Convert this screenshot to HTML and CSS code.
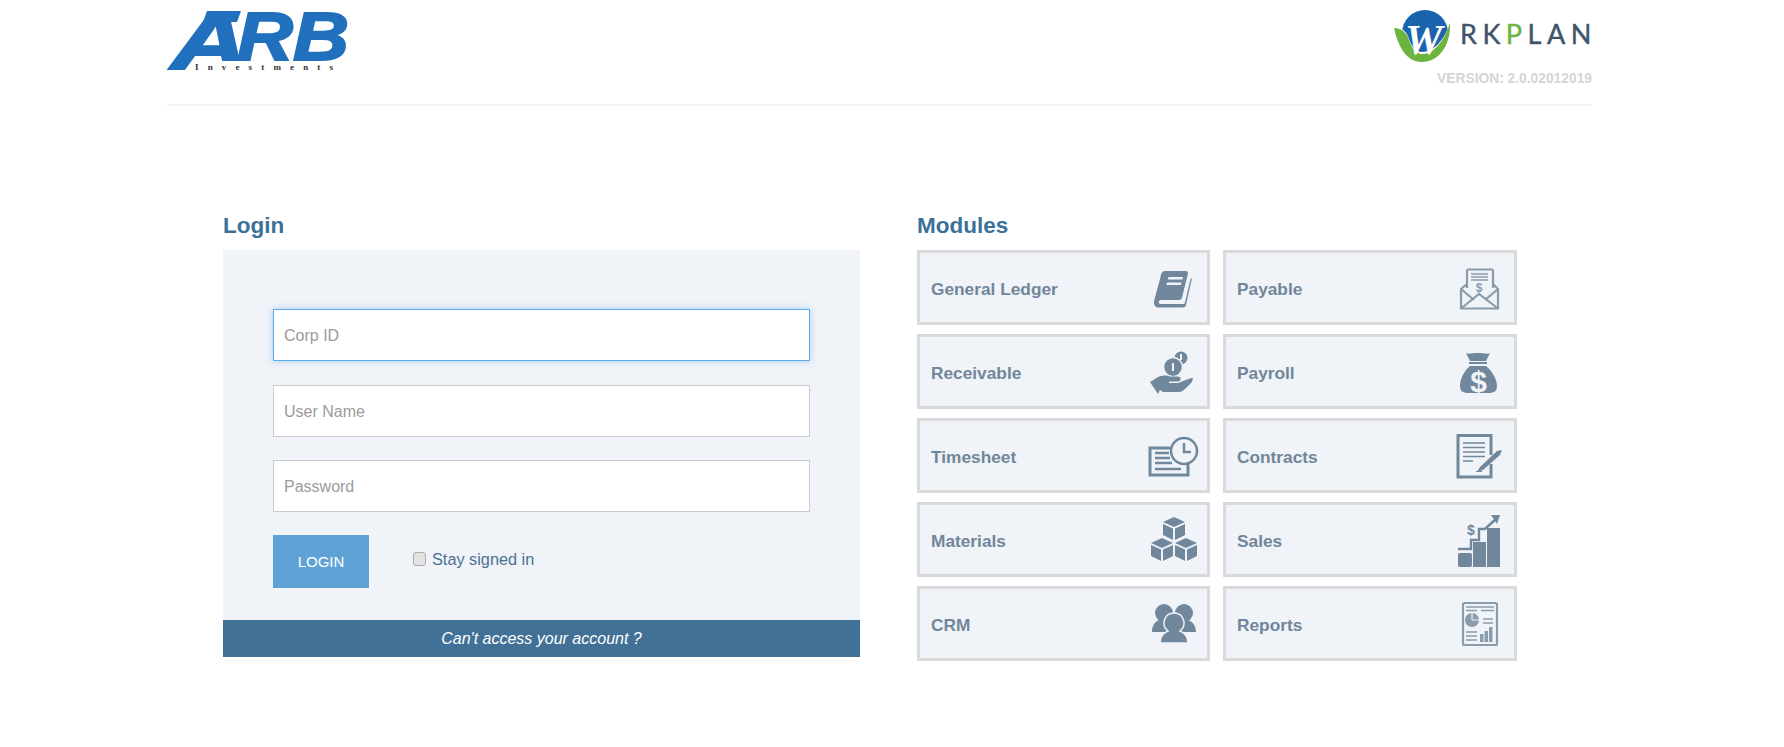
FILE: index.html
```html
<!DOCTYPE html>
<html lang="en">
<head>
<meta charset="utf-8">
<title>ARB Investments - Workplan Login</title>
<link rel="stylesheet" href="styles.css">
</head>
<body>
<div class="page">
  <header class="header">
    <svg class="logo-arb" viewBox="0 0 182 62" width="182" height="62" role="img" aria-label="ARB Investments">
      <text class="arb-text arb-a" x="4" y="59" textLength="77" lengthAdjust="spacingAndGlyphs">A</text>
      <polygon class="arb-fill" points="40,1 74,1 70,12 36,12"/>
      <rect class="arb-mask" x="26" y="51" width="60" height="12"/>
      <text class="arb-text" x="70" y="50" textLength="112" lengthAdjust="spacingAndGlyphs">RB</text>
      <text class="arb-sub" x="28" y="60" textLength="138">Investments</text>
    </svg>
    <div class="brand">
      <svg class="logo-wp" viewBox="0 0 198 52" width="198" height="52" role="img" aria-label="Workplan">
        <circle class="wp-blue" cx="31" cy="23" r="23"/>
        <path class="wp-gap" d="M0 18C8 17 13 22 15 29c3 9 8 13 13 13 12 0 22-12 28-29 1 22-11 39-28 39C12 52 4 36 0 18z"/>
        <path class="wp-green" d="M0 18C8 18 13 23 15 30c3 9 8 14 13 14 12 0 22-13 28-31 1 22-11 39-28 39C12 52 4 36 0 18z"/>
        <text class="wp-w" x="11" y="44">W</text>
        <text class="wp-text" x="66" y="34">RK<tspan class="wp-p">P</tspan>LAN</text>
      </svg>
      <div class="version">VERSION: 2.0.02012019</div>
    </div>
  </header>

  <main class="main">
    <section class="login">
      <h2 class="title">Login</h2>
      <form class="panel">
        <div class="fields">
          <input class="field is-focus" type="text" placeholder="Corp ID">
          <input class="field" type="text" placeholder="User Name">
          <input class="field" type="password" placeholder="Password">
          <div class="actions">
            <button class="btn" type="button">LOGIN</button>
            <label class="stay"><input class="check" type="checkbox"><span>Stay signed in</span></label>
          </div>
        </div>
        <a class="help">Can't access your account ?</a>
      </form>
    </section>

    <section class="modules">
      <h2 class="title">Modules</h2>
      <div class="tiles">
        <a class="tile"><span>General Ledger</span>
          <svg class="ico" viewBox="0 0 40 40" width="40" height="40">
            <path class="solid" fill-rule="evenodd" d="M13 3h21c1.500 0 2.300 1 2 2.500l-6 24c-.5 1.700-1.500 2.500-3 2.500H9c-3 0-3 4 0 4h22c1 0 1.600-.5 2-1.500L38.500 11l1.500-1-6 27c-.5 1.700-1.500 2.500-3.500 2.500H7c-3 0-5-2-5-5 0-1 .3-2 .5-3L9 7c.6-2.500 2-4 4-4zM16.500 9l-.6 2.500h14.500l.6-2.500zM15 14.500l-.6 2.500h14.500l.6-2.500z"/>
          </svg>
        </a>
        <a class="tile"><span>Payable</span>
          <svg class="ico ico-light" viewBox="0 0 40 40" width="40" height="40">
            <path class="line" d="M8 20V3a1.500 1.500 0 0 1 1.500-1.500h23A1.500 1.500 0 0 1 34 3v17"/>
            <path class="line" d="M8 16 2 21v19.500h37V21l-5-5M2 21l13 11M39 21 26 32M2 40.500 20 26l19 14.500"/>
            <path class="thin" d="M12 6h17M12 9h17M12 12h17"/>
            <text class="ico-dollar-sm" x="20" y="24">$</text>
          </svg>
        </a>
        <a class="tile"><span>Receivable</span>
          <svg class="ico" viewBox="0 0 40 40" width="40" height="40">
            <circle class="solid" cx="29" cy="6" r="6.500"/>
            <circle class="solid halo" cx="21" cy="15" r="9.500"/>
            <rect class="cut" x="20" y="11" width="2" height="8"/>
            <rect class="cut" x="28" y="2" width="2" height="6"/>
            <path class="solid" d="M-2 30 6 25c5-2 9-2 12-.5h8c3.500 0 3.500 5 0 5h-9v1.500h9l9-3.500c2-.8 4-1.500 6-1.500l-1 4-7 7c-2 2-4 3-6 3H11l-3-2-2 4z"/>
          </svg>
        </a>
        <a class="tile"><span>Payroll</span>
          <svg class="ico" viewBox="0 0 40 40" width="40" height="40">
            <path class="solid" d="M7 1c3 1.500 6 0 12 0s9 1.500 12 0l-4 8H11zM10 10h18v2H10zM11 14h16c6 5 11 13 11 20 0 5-3 7-8 7H9c-5 0-8-2-8-7 0-7 4-15 10-20z"/>
            <text class="ico-dollar" x="19.500" y="40">$</text>
          </svg>
        </a>
        <a class="tile"><span>Timesheet</span>
          <svg class="ico" viewBox="0 0 40 40" width="40" height="40">
            <path class="heavy" d="M36 24v15H-2V12h20"/>
            <path class="heavy-thin" d="M3 17h14M3 22h15M3 27h17M3 33h26"/>
            <circle class="clock" cx="32" cy="15" r="13"/>
            <path class="heavy-thin" d="M32 7v9h7"/>
          </svg>
        </a>
        <a class="tile"><span>Contracts</span>
          <svg class="ico" viewBox="0 0 40 40" width="40" height="40">
            <path class="heavy" d="M32 28v13H-1V-.5h33V19"/>
            <path class="thin-dark" d="M4 7h22M4 11.500h22M4 16h22M4 20.500h22M4 25h10"/>
            <path class="solid" d="M21 31 38 15l5-1-2 5-17 15-6 2zM17 35h6v1h-6z"/>
          </svg>
        </a>
        <a class="tile"><span>Materials</span>
          <svg class="ico" viewBox="0 0 40 40" width="40" height="40">
            <g class="solid">
              <path d="M22-3 33 2 22 7 11 2zM11 4l10 4.500V20l-10-5zM33 4 23 8.500V20l10-5z"/>
              <path d="M10 18l11 5-11 5-11-5zM-1 25l10 4.500V41l-10-5zM21 25l-10 4.500V41l10-5z"/>
              <path d="M34 18l11 5-11 5-11-5zM23 25l10 4.500V41l-10-5zM45 25l-10 4.500V41l10-5z"/>
            </g>
          </svg>
        </a>
        <a class="tile"><span>Sales</span>
          <svg class="ico" viewBox="0 0 40 40" width="40" height="40">
            <rect class="solid" x="-1" y="33" width="14" height="14" rx="2"/>
            <rect class="solid" x="14" y="22" width="13" height="25"/>
            <rect class="solid" x="28" y="8" width="13" height="39"/>
            <path class="heavy-thin" d="M-1 29h13v-9h8V9h6L38-2"/>
            <path class="solid" d="M32-5h9l-3 9z"/>
            <text class="ico-dollar-md" x="12" y="15">$</text>
          </svg>
        </a>
        <a class="tile"><span>CRM</span>
          <svg class="ico" viewBox="0 0 40 40" width="40" height="40">
            <circle class="solid" cx="12" cy="9" r="9"/>
            <circle class="solid" cx="32" cy="9" r="9"/>
            <path class="solid" d="M0 28c0-7 3-10 7-12h10l4 4 5-4h10c5 2 8 6 8 12z"/>
            <path class="solid halo" d="M22 9a10 10 0 0 1 6 18c5 2 8 6 8 12H8c0-6 3-10 8-12a10 10 0 0 1 6-18z"/>
          </svg>
        </a>
        <a class="tile"><span>Reports</span>
          <svg class="ico ico-light" viewBox="0 0 40 40" width="40" height="40">
            <rect class="line" x="4" y="-1" width="34" height="42" rx="1.500"/>
            <path class="thin" d="M7 3h28M7 6.500h11M22 6.500h13M24 15h10M24 19h10M7 28h11M7 32h11M7 36h11"/>
            <circle class="solid-light" cx="13" cy="16" r="7"/>
            <path class="wedge" d="M13 16V9M13 16h7"/>
            <path class="solid-light" d="M21 30h3.500v8H21zM25.500 27H29v11h-3.500zM30 23h3.500v15H30z"/>
          </svg>
        </a>
      </div>
    </section>
  </main>
</div>
</body>
</html>
```

FILE: styles.css
```css
* { box-sizing: border-box; }

html, body { margin: 0; padding: 0; background: #fff; }

body {
  font-family: "Liberation Sans", Arial, sans-serif;
  font-size: 16px;
  color: #4a7290;
}

.page {
  width: 1425px;
  margin-left: 167px;
}

/* Header */
.header {
  display: flex;
  justify-content: space-between;
  align-items: flex-start;
  height: 106px;
  padding-top: 10px;
  border-bottom: 2px solid #f0f3f7;
}

.logo-arb { display: block; overflow: visible; }
.arb-fill { fill: #2170bd; }
.arb-mask { fill: #fff; }
.arb-text {
  font: italic 700 69px "Liberation Sans", Arial, sans-serif;
  fill: #2170bd;
  stroke: #2170bd;
  stroke-width: 2px;
}
.arb-a { font-size: 80px; }
.arb-sub {
  font: 700 9px "Liberation Serif", "Times New Roman", serif;
  fill: #333;
}

.brand {
  display: flex;
  flex-direction: column;
  align-items: flex-end;
}
.logo-wp { display: block; overflow: visible; }
.wp-blue { fill: #1a63ad; }
.wp-gap { fill: #fff; }
.wp-green { fill: #6cb33f; }
.wp-w {
  font: italic 700 42px "Liberation Serif", "Times New Roman", serif;
  fill: #fff;
}
.wp-text {
  font: 400 27px Lato, "Open Sans", sans-serif;
  letter-spacing: 5.500px;
  fill: #3f5468;
  stroke: #3f5468;
  stroke-width: .4px;
}
.wp-p { fill: #6cb33f; stroke: #6cb33f; }

.version {
  margin-top: 9px;
  font-size: 13.800px;
  font-weight: 700;
  line-height: 16px;
  color: #d3d5d8;
}

/* Main */
.main {
  display: grid;
  grid-template-columns: 637px 600px;
  column-gap: 57px;
  padding: 106px 0 0 56px;
}

.title {
  margin: 0 0 11px;
  font-size: 22.500px;
  line-height: 27px;
  font-weight: 700;
  color: #3b7199;
}

/* Login */
.panel {
  display: flex;
  flex-direction: column;
  height: 407px;
  background: #f0f3f8;
}

.fields {
  flex: 1;
  display: flex;
  flex-direction: column;
  gap: 23.500px;
  padding: 59px 50px 0;
}

.field {
  display: block;
  width: 537px;
  height: 52px;
  padding: 2px 10px 0;
  font: 16px "Liberation Sans", Arial, sans-serif;
  color: #444;
  background: #fff;
  border: 1px solid #c8cacd;
  border-radius: 0;
  outline: none;
}
.field::placeholder { color: #9b9b9b; opacity: 1; }
.field.is-focus {
  border-color: #5cacee;
  box-shadow: 0 0 6px rgba(92, 172, 238, .55);
}

.actions {
  display: flex;
  align-items: flex-start;
  gap: 44px;
  margin-top: -1px;
}

.btn {
  width: 96px;
  height: 53px;
  padding: 0;
  font: 15px "Liberation Sans", Arial, sans-serif;
  color: #fff;
  background: #5fa3d6;
  border: 0;
}

.stay {
  display: flex;
  align-items: center;
  gap: 6px;
  margin-top: 14px;
  line-height: 20px;
  font-size: 16.300px;
  color: #4a7290;
}

.check {
  appearance: none;
  width: 13px;
  height: 14px;
  margin: 1px 0 0;
  background: #e2e2e2;
  border: 1px solid #adadad;
  border-radius: 3px;
}

.help {
  display: block;
  height: 37px;
  line-height: 37px;
  text-align: center;
  font-style: italic;
  color: #fff;
  background: #417196;
}

/* Modules */
.tiles {
  display: grid;
  grid-template-columns: 293px 294px;
  grid-auto-rows: 75px;
  column-gap: 13px;
  row-gap: 9px;
}

.tile {
  display: flex;
  justify-content: space-between;
  align-items: center;
  padding: 0 15px 0 11px;
  font-size: 17.300px;
  font-weight: 700;
  color: #71869b;
  background: #f0f3f8;
  border: 3px solid #d9dadb;
}
.tile > span { margin-top: 4px; }

/* Icons */
.ico { display: block; overflow: visible; flex: none; color: #71879c; }
.ico-light { color: #8b9cad; }

.solid { fill: #71879c; }
.solid-light { fill: #8b9cad; }
.halo { stroke: #f0f3f8; stroke-width: 1.500; }
.cut { fill: #f0f3f8; }
.wedge { fill: none; stroke: #f0f3f8; stroke-width: 1.200; }
.line { fill: none; stroke: currentColor; stroke-width: 2.200; }
.thin { fill: none; stroke: currentColor; stroke-width: 1.300; }
.thin-dark { fill: none; stroke: #71879c; stroke-width: 1.600; }
.heavy { fill: none; stroke: #71879c; stroke-width: 3; }
.heavy-thin { fill: none; stroke: #71879c; stroke-width: 2.400; }
.clock { fill: #f0f3f8; stroke: #71879c; stroke-width: 2.500; }

.ico-dollar, .ico-dollar-sm, .ico-dollar-md {
  font-family: "Liberation Sans", Arial, sans-serif;
  font-weight: 700;
  text-anchor: middle;
}
.ico-dollar { font-size: 30px; fill: #f0f3f8; }
.ico-dollar-sm { font-size: 12px; fill: #8b9cad; }
.ico-dollar-md { font-size: 14px; fill: #71879c; }
```
